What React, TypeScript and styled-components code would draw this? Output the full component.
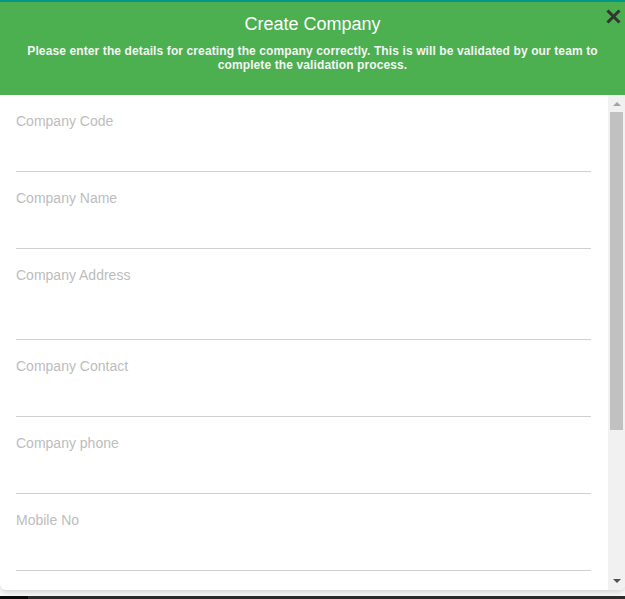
import React from "react";
import styled, { createGlobalStyle } from "styled-components";

const Global = createGlobalStyle`
  html, body { margin: 0; padding: 0; background: #ffffff; }
  body { font-family: Arial, "Liberation Sans", sans-serif; }
  * { box-sizing: border-box; }
`;

const Page = styled.div`
  width: 625px;
  height: 599px;
  display: flex;
  flex-direction: column;
  overflow: hidden;
`;

const Modal = styled.div`
  height: 590px;
  display: flex;
  flex-direction: column;
  border-top: 2px solid #009688;
  border-radius: 0 0 6px 6px;
  box-shadow: 0 3px 7px rgba(0, 0, 0, 0.18);
  overflow: hidden;
  background: #ffffff;
`;

const Header = styled.div`
  position: relative;
  height: 93px;
  flex: none;
  background: #4caf50;
  padding: 11px 20px 0;
  text-align: center;
  color: #ffffff;
`;

const Title = styled.h2`
  margin: 0;
  font-size: 18px;
  line-height: 22px;
  font-weight: normal;
`;

const Subtitle = styled.p`
  margin: 9px 0 0;
  font-size: 12px;
  line-height: 14px;
  font-weight: bold;
  letter-spacing: 0.11px;
  color: #f4f4f4;
`;

const Close = styled.button`
  position: absolute;
  top: 6px;
  right: 3px;
  width: 17px;
  height: 17px;
  padding: 0;
  border: 0;
  background: transparent;
  display: flex;
  align-items: center;
  justify-content: center;
  cursor: pointer;
`;

const Body = styled.div`
  flex: 1;
  display: flex;
  min-height: 0;
`;

const Content = styled.div`
  flex: 1;
  overflow: hidden;
  padding: 0 17px 0 16px;
`;

const Field = styled.div<{ $tall?: boolean }>`
  padding-top: 18px;
  height: ${(p) => (p.$tall ? 91 : 77)}px;
  border-bottom: 1px solid #d0d0d0;
  display: flex;
  flex-direction: column;
`;

const Label = styled.label`
  font-size: 14px;
  line-height: 16px;
  color: #bdbdbd;
`;

const Input = styled.input`
  flex: 1;
  border: 0;
  outline: none;
  background: transparent;
  font: inherit;
  font-size: 14px;
  padding: 0;
`;

const Scrollbar = styled.div`
  width: 17px;
  flex: none;
  background: #f1f1f1;
  display: flex;
  flex-direction: column;
`;

const Arrow = styled.div`
  height: 17px;
  flex: none;
  display: flex;
  align-items: center;
  justify-content: center;
`;

const Track = styled.div`
  flex: 1;
  padding: 0 2px;
`;

const Thumb = styled.div`
  height: 318px;
  background: #c1c1c1;
`;

const Spacer = styled.div`
  flex: 1;
`;

const BottomBar = styled.div`
  height: 3px;
  flex: none;
  display: flex;
  background: #2b2b2b;
`;

const BottomLeft = styled.div`
  width: 28px;
  background: #0a0a0a;
`;

const fields = [
  { label: "Company Code" },
  { label: "Company Name" },
  { label: "Company Address", tall: true },
  { label: "Company Contact" },
  { label: "Company phone" },
  { label: "Mobile No" },
];

export default function App() {
  return (
    <>
      <Global />
      <Page>
        <Modal>
          <Header>
            <Title>Create Company</Title>
            <Subtitle>
              Please enter the details for creating the company correctly. This is will be validated by our team to
              complete the validation process.
            </Subtitle>
            <Close aria-label="Close">
              <svg width="15" height="15" viewBox="0 0 15 15">
                <path d="M1.5 1.5 L13.5 13.5 M13.5 1.5 L1.5 13.5" stroke="#333333" strokeWidth="3" strokeLinecap="butt" />
              </svg>
            </Close>
          </Header>
          <Body>
            <Content>
              {fields.map((f) => (
                <Field key={f.label} $tall={f.tall}>
                  <Label>{f.label}</Label>
                  <Input />
                </Field>
              ))}
            </Content>
            <Scrollbar>
              <Arrow>
                <svg width="8" height="5" viewBox="0 0 8 5">
                  <path d="M0 5 L4 1 L8 5 Z" fill="#a3a3a3" />
                </svg>
              </Arrow>
              <Track>
                <Thumb />
              </Track>
              <Arrow>
                <svg width="8" height="5" viewBox="0 0 8 5">
                  <path d="M0 0 L8 0 L4 4 Z" fill="#505050" />
                </svg>
              </Arrow>
            </Scrollbar>
          </Body>
        </Modal>
        <Spacer />
        <BottomBar>
          <BottomLeft />
        </BottomBar>
      </Page>
    </>
  );
}
